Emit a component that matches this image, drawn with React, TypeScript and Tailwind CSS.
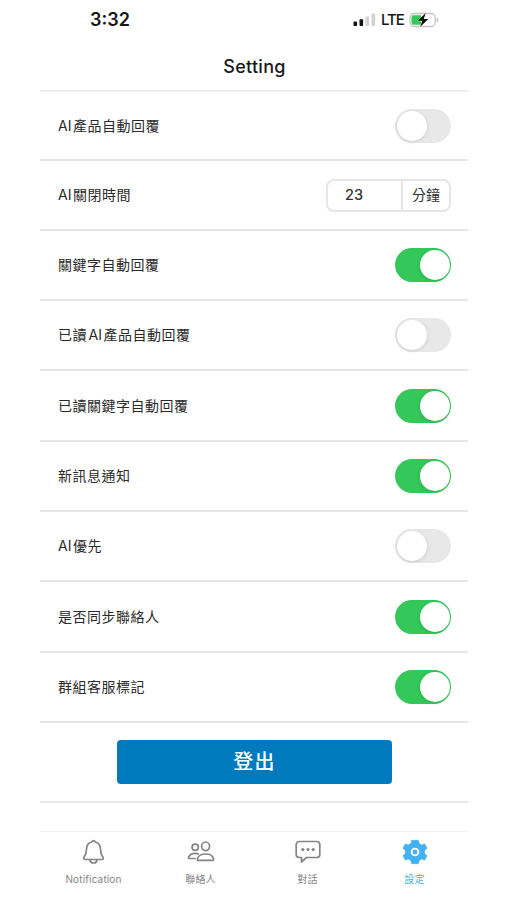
import { useState, type ReactNode } from "react";
import clsx from "clsx";

type Setting = {
  label: string;
  height: string;
  enabled?: boolean;
  minutes?: number;
};

const settings: Setting[] = [
  { label: "AI產品自動回覆", height: "h-[69px]", enabled: false },
  { label: "AI關閉時間", height: "h-[70px]", minutes: 23 },
  { label: "關鍵字自動回覆", height: "h-[70px]", enabled: true },
  { label: "已讀AI產品自動回覆", height: "h-[70px]", enabled: false },
  { label: "已讀關鍵字自動回覆", height: "h-[71px]", enabled: true },
  { label: "新訊息通知", height: "h-[70px]", enabled: true },
  { label: "AI優先", height: "h-[70px]", enabled: false },
  { label: "是否同步聯絡人", height: "h-[71px]", enabled: true },
  { label: "群組客服標記", height: "h-[70px]", enabled: true },
];

const StatusBar = () => (
  <div className="flex h-[39px] items-center justify-between pl-[50px] pr-[28px]">
    <span className="text-[18px] font-semibold leading-none text-[#161616]">3:32</span>
    <div className="flex items-center">
      <svg width="23" height="14" viewBox="0 0 23 14">
        <rect x="0.5" y="8.5" width="3.6" height="4.5" rx="1" fill="#111" />
        <rect x="6.5" y="6.2" width="3.6" height="6.8" rx="1" fill="#111" />
        <rect x="12.5" y="3.5" width="3.6" height="9.5" rx="1" fill="#d2d2d2" />
        <rect x="18.5" y="0.5" width="3.6" height="12.5" rx="1" fill="#d2d2d2" />
      </svg>
      <span className="ml-[5px] w-[23px] text-[15px] font-medium leading-none tracking-[-1.1px] text-[#161616]">
        LTE
      </span>
      <svg className="ml-[5px]" width="31" height="16" viewBox="0 0 31 16">
        <rect x="1" y="1.5" width="25.2" height="13" rx="4" fill="#fff" stroke="#c4c4c4" strokeWidth="1.3" />
        <path d="M27.7 5.500c2.400.7 2.400 4.300 0 5z" fill="#c4c4c4" />
        <path d="M4.500 3.300H12v9.400H4.500a2 2 0 0 1-2-2V5.300a2 2 0 0 1 2-2z" fill="#34c759" />
        <path
          d="M16.800 1 8.800 8.800h4.500l-2.300 6.200 8.300-7.900h-4.600z"
          fill="#0b0b0b"
          stroke="#fff"
          strokeWidth="0.6"
          paintOrder="stroke"
        />
      </svg>
    </div>
  </div>
);

const Toggle = ({ initial }: { initial: boolean }) => {
  const [on, setOn] = useState(initial);

  return (
    <button
      type="button"
      role="switch"
      aria-checked={on}
      onClick={() => setOn(!on)}
      className={clsx(
        "flex h-[34px] w-14 items-center rounded-full px-[1.5px]",
        on ? "justify-end bg-[#34c759]" : "justify-start bg-[#e8e8e8]"
      )}
    >
      <span className="size-[30px] rounded-full bg-white shadow-[0_1px_4px_rgba(0,0,0,0.12)]" />
    </button>
  );
};

const MinutesField = ({ value }: { value: number }) => (
  <div className="flex h-[33px] w-[125px] overflow-hidden rounded-lg border-2 border-[#e6e6e6] text-[#333]">
    <span className="flex flex-1 items-center pl-[17px] text-[14.5px] font-medium">{value}</span>
    <span className="flex w-[48px] items-center justify-center border-l-2 border-[#e6e6e6] text-sm">
      分鐘
    </span>
  </div>
);

// thin gap where latin letters meet CJK characters
const SettingLabel = ({ text }: { text: string }) => (
  <span className="text-sm tracking-[0.5px] text-[#2a2a2a]">
    {text.split(/(AI)/).map((part, i) =>
      part === "AI" ? (
        <span key={i} className={clsx("mr-[1.5px] tracking-normal", text.indexOf("AI") > 0 && "ml-[1.5px]")}>
          AI
        </span>
      ) : (
        part
      )
    )}
  </span>
);

const Tab = ({ label, active, children }: { label: string; active?: boolean; children: ReactNode }) => (
  <div className={clsx("flex flex-1 flex-col items-center pt-1.5", active ? "text-[#43b0f1]" : "text-[#858585]")}>
    <svg width="28" height="28" viewBox="0 0 28 28" fill="none" stroke="currentColor" strokeWidth="1.7" strokeLinejoin="round" strokeLinecap="round">
      {children}
    </svg>
    <span className="mt-[5.5px] text-[10px] leading-[14px] tracking-[0.15px]">{label}</span>
  </div>
);

export default function App() {
  return (
    <div className="h-[900px] w-[507px] bg-white pl-10 font-['Inter','Noto_Sans_CJK_TC',sans-serif]">
      <div className="flex h-full w-[428px] flex-col">
        <StatusBar />
        <header className="flex h-[53px] items-center justify-center border-b-2 border-[#eeeeee] pt-1">
          <h1 className="pl-px text-[18px] font-medium leading-none tracking-[0.3px] text-[#1a1a1a]">Setting</h1>
        </header>

        <main>
          {settings.map(({ label, height, enabled, minutes }) => (
            <div
              key={label}
              className={clsx("flex items-center justify-between border-b-2 border-[#e6e6e6] pl-[18px] pr-[17px]", height)}
            >
              <SettingLabel text={label} />
              {minutes !== undefined ? <MinutesField value={minutes} /> : <Toggle initial={!!enabled} />}
            </div>
          ))}
          <div className="flex h-20 items-center justify-center border-b-2 border-[#e8e8e8] pl-px">
            <button
              type="button"
              className="h-11 w-[275px] rounded bg-[#007abc] text-xl font-medium tracking-[1.2px] text-white"
            >
              登出
            </button>
          </div>
        </main>

        <nav className="mt-auto flex h-[69px] border-t border-[#f0f0f0]">
          <Tab label="Notification">
            <path d="M13.500 2.700c-.9 0-1.500.5-1.800 1.300C8.300 4.900 6.700 7.200 6.600 10.500c-.1 4-.5 6-2.400 8.600-.9 1.300-.5 2.400.9 2.400h16.800c1.400 0 1.800-1.100.9-2.400-1.900-2.600-2.300-4.600-2.400-8.600-.1-3.300-1.700-5.600-5.100-6.500-.3-.8-.9-1.300-1.800-1.300z" />
            <path d="M10 21.800c.2 2 1.600 3.200 3.500 3.200s3.300-1.200 3.500-3.200" />
          </Tab>
          <Tab label="聯絡人">
            <circle cx="8.200" cy="9.300" r="3.100" />
            <ellipse cx="18.600" cy="8.300" rx="4" ry="4.300" />
            <path d="M11 22.400c-.7 0-.9-.5-.7-1.300.8-3 4-5.100 8.300-5.100s7.500 2.100 8 5.100c.1.800-.2 1.300-.9 1.300z" />
            <path d="M8 20.500H2.500c-.8 0-1.200-.5-.9-1.300 1-2.300 3.300-3.900 6.400-3.900 1.300 0 2.300.2 3.200.6" />
          </Tab>
          <Tab label="對話">
            <path d="M5.200 3.500h17.600c1.700 0 3 1.300 3 3v10c0 1.700-1.300 3-3 3H12.500l-5 4.500v-4.500H5.200c-1.700 0-3-1.300-3-3v-10c0-1.700 1.300-3 3-3z" />
            <g fill="currentColor" stroke="none">
              <circle cx="8.800" cy="11.500" r="1.600" />
              <circle cx="14" cy="11.500" r="1.600" />
              <circle cx="19.200" cy="11.500" r="1.600" />
            </g>
          </Tab>
          <Tab label="設定" active>
            <path
              d="M10.600 2.300h6.800l.7 3.200 2.500 1.400 3.100-1 2.400 4.300-2.400 2.200v3.200l2.400 2.200-2.400 4.300-3.100-1-2.500 1.400-.7 3.200h-6.800l-.7-3.200-2.500-1.400-3.100 1-2.400-4.300 2.400-2.200v-3.200l-2.400-2.200 2.400-4.300 3.100 1 2.500-1.400z"
              fill="currentColor"
              strokeWidth="0.6"
            />
            <circle cx="14" cy="14" r="3.400" stroke="#fff" strokeWidth="1.900" />
          </Tab>
        </nav>
      </div>
    </div>
  );
}
